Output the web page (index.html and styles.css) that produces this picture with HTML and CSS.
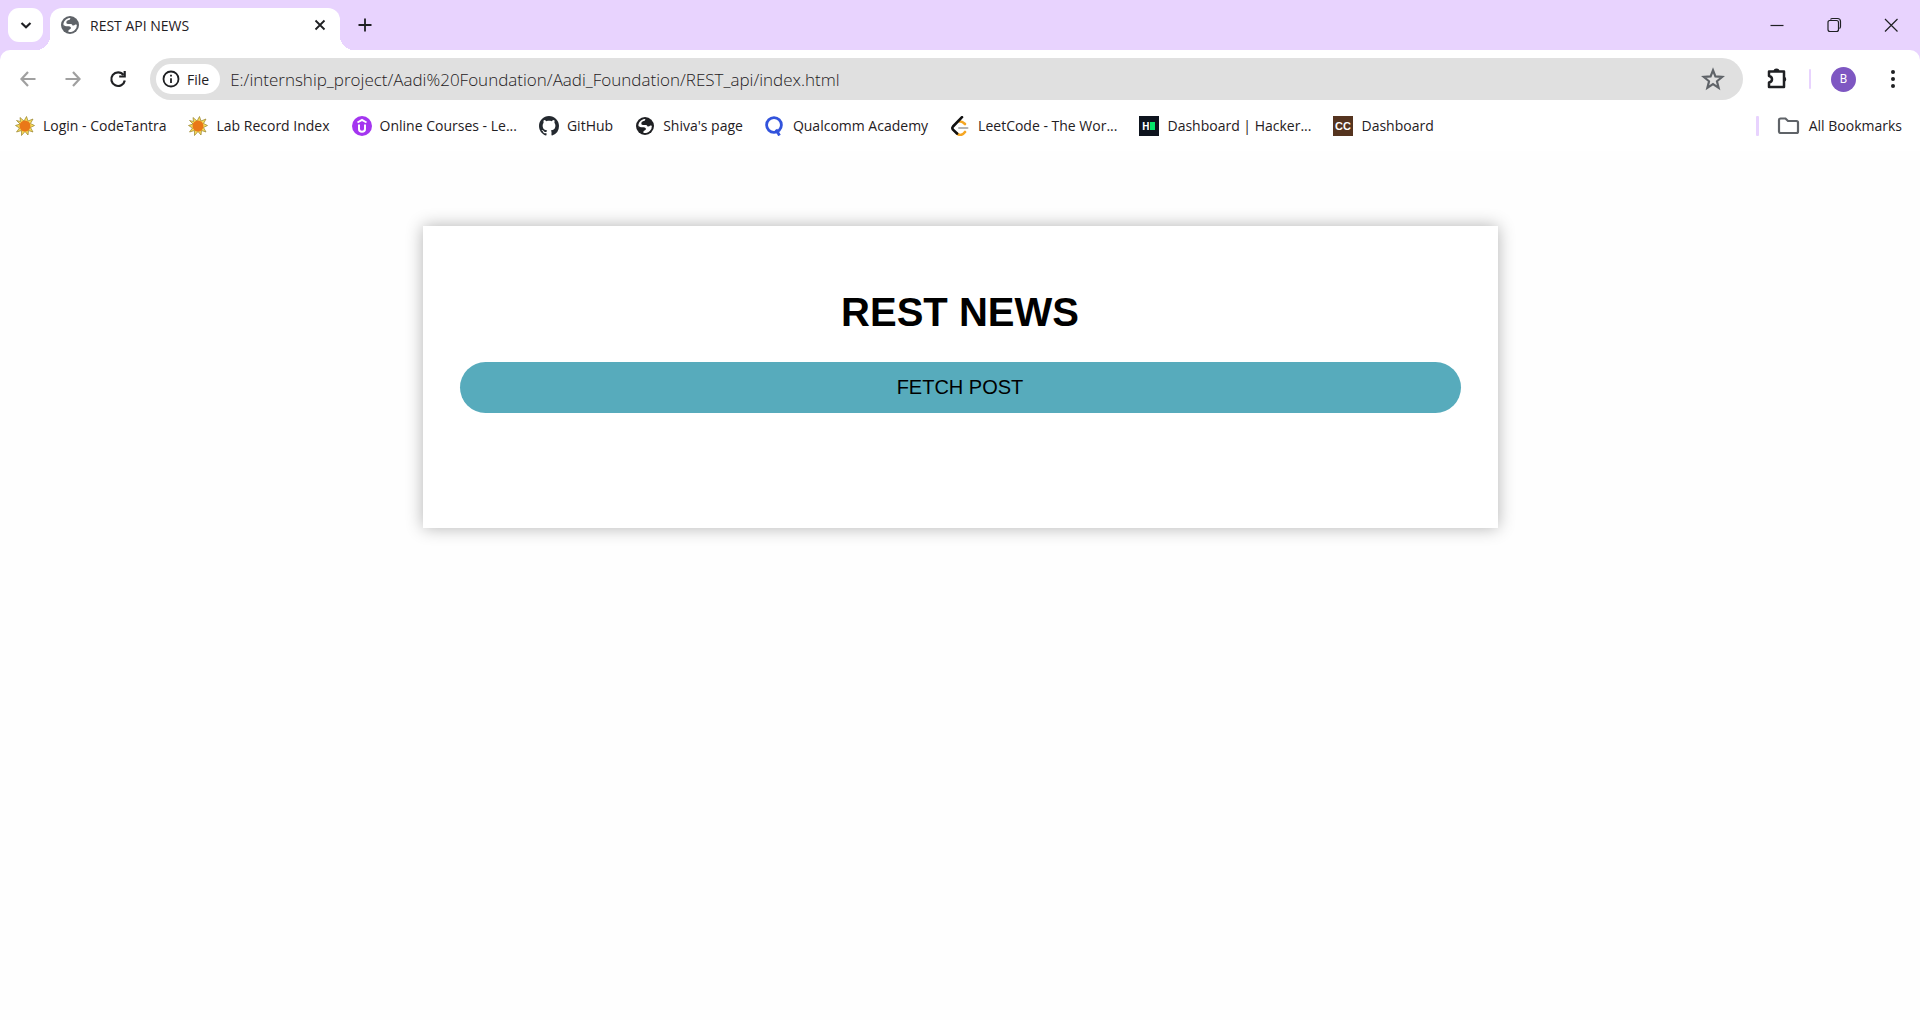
FILE: index.html
```html
<!DOCTYPE html>
<html lang="en">
<head>
<meta charset="utf-8">
<meta name="viewport" content="width=device-width, initial-scale=1">
<title>REST API NEWS</title>
<link rel="stylesheet" href="styles.css">
</head>
<body>
<svg class="defs" aria-hidden="true">
  <symbol id="globe" viewBox="0 0 20 20">
    <circle cx="10" cy="10" r="9" fill="currentColor"/>
    <path d="M10.500 3.200Q10 5 8 5.200Q6.300 5.600 6.300 7.500Q6.300 9 8.300 9H11Q12.300 9 12.500 10.500Q14.300 10.800 15.200 9.500L16.900 9.700Q17 13 14.800 14.900Q13.500 16.500 11.200 16.900Q9 17 8.200 16.400Q8.300 14.600 10 14.200Q11.300 13.800 10.800 12.300Q9.800 11 8 11.200H3.100Q3 5 8.300 3.200Q9.400 2.900 10.500 3.200Z" fill="#fff"/>
    <path d="M3 9.500L7 12.500V16.500L4 15Z" fill="currentColor"/>
  </symbol>
  <symbol id="sun" viewBox="0 0 20 20">
    <path d="M5 1.500L9 5L11.500 .5L13 5L18 3L15.500 7.500L19.500 9.500L15.500 11.500L18 16L13.500 14.500L13 19L10 15.500L6.500 19.500L6.500 14.500L1.500 16L4.500 12L.5 9.500L5 8L1.500 4.500L5.500 5.500Z" fill="#f6dc5a" stroke="#96812d" stroke-width=".7"/>
    <circle cx="10" cy="10" r="5.500" fill="#e97817"/>
  </symbol>
</svg>

<header class="browser">
  <div class="tabstrip">
    <button class="tab-search" aria-label="Search tabs"><svg width="20" height="20" viewBox="0 0 20 20"><path d="M5.500 8L10 12.200L14.500 8" class="line heavy"/></svg></button>
    <div class="tab">
      <svg class="tab-icon" width="20" height="20"><use href="#globe"/></svg>
      <span class="tab-title">REST API NEWS</span>
      <button class="plain small" aria-label="Close tab"><svg width="20" height="20" viewBox="0 0 20 20"><path d="M5.500 5.500L14.500 14.500M14.500 5.500L5.500 14.500" class="line"/></svg></button>
    </div>
    <button class="plain new-tab" aria-label="New tab"><svg width="20" height="20" viewBox="0 0 20 20"><path d="M10 3.500V16.500M3.500 10H16.500" class="line"/></svg></button>
    <div class="window-controls">
      <button class="plain" aria-label="Minimize"><svg width="20" height="20" viewBox="0 0 20 20"><path d="M3.500 10.500H16.500" class="line thin"/></svg></button>
      <button class="plain" aria-label="Restore"><svg width="20" height="20" viewBox="0 0 20 20"><path d="M6.500 4.500Q7 3.500 8.500 3.500H13.500Q16.500 3.500 16.500 6.500V11.500Q16.500 13 15.500 13.500M5 5.500H12.500Q14.500 5.500 14.500 7.500V14.500Q14.500 16.500 12.500 16.500H6Q4 16.500 4 14.500V7.500Q4 5.500 6 5.500" class="line thin"/></svg></button>
      <button class="plain" aria-label="Close window"><svg width="20" height="20" viewBox="0 0 20 20"><path d="M4 4L16.500 16.500M16.500 4L4 16.500" class="line thin"/></svg></button>
    </div>
  </div>

  <div class="toolbar">
    <nav class="nav" aria-label="History">
      <button class="plain muted" aria-label="Back"><svg width="20" height="20" viewBox="0 0 20 20"><path d="M17.500 10H3.500M10 3L3.500 10L10 17" class="line heavy"/></svg></button>
      <button class="plain muted" aria-label="Forward"><svg width="20" height="20" viewBox="0 0 20 20"><path d="M2.500 10H16.500M10 3L16.500 10L10 17" class="line heavy"/></svg></button>
      <button class="plain" aria-label="Reload"><svg width="20" height="20" viewBox="0 0 20 20"><path d="M15.500 6A6.800 6.800 0 1 0 16.800 11.500" class="line heavy"/><path d="M16.700 2V7.500H11.200" class="line heavy"/></svg></button>
    </nav>
    <div class="omnibox">
      <button class="chip"><svg width="20" height="20" viewBox="0 0 20 20"><circle cx="10" cy="10" r="7.500" class="line"/><path d="M10 9.200V14M10 5.800V7.600" class="line"/></svg>File</button>
      <input class="url" type="text" aria-label="Address" value="E:/internship_project/Aadi%20Foundation/Aadi_Foundation/REST_api/index.html">
      <button class="plain grey" aria-label="Bookmark this page"><svg width="24" height="24" viewBox="0 0 20 20"><path d="M10 2.700L12 7.800L17.700 8.200L13.300 11.900L14.700 17.400L10 14.300L5.300 17.400L6.700 11.900L2.300 8.200L8 7.800Z" class="line"/></svg></button>
    </div>
    <button class="plain extensions" aria-label="Extensions"><svg width="24" height="24" viewBox="0 0 24 24"><path d="M4 4.500H19V20H4V15.500Q7 14.800 7 12.200Q7 9.500 4 9Z" class="line wide"/><path d="M8.500 4.500A3 3 0 0 1 14.500 4.500ZM19 9.500A2.800 2.800 0 0 1 19 15Z" fill="currentColor"/></svg></button>
    <span class="divider"></span>
    <button class="avatar" aria-label="Profile B">B</button>
    <button class="plain" aria-label="Menu"><svg width="20" height="20" viewBox="0 0 20 20" fill="currentColor"><circle cx="10" cy="3" r="2"/><circle cx="10" cy="10" r="2"/><circle cx="10" cy="17" r="2"/></svg></button>
  </div>

  <nav class="bookmarks" aria-label="Bookmarks">
    <a href="#"><svg width="20" height="20"><use href="#sun"/></svg>Login - CodeTantra</a>
    <a href="#"><svg width="20" height="20"><use href="#sun"/></svg>Lab Record Index</a>
    <a href="#"><svg width="20" height="20" viewBox="0 0 20 20"><circle cx="10" cy="10" r="10" fill="#a435f0"/><path d="M5.500 6.500L10 4L14.500 6.500M7 8.500V13Q7 15.800 10 15.800Q13 15.800 13 13V8.500" fill="none" stroke="#fff" stroke-width="2"/></svg>Online Courses - Le...</a>
    <a href="#"><svg width="20" height="20" viewBox="0 0 16 16"><path fill="#24292f" d="M8 0C3.580 0 0 3.580 0 8c0 3.540 2.290 6.530 5.470 7.590.4.070.55-.17.55-.38 0-.19-.01-.82-.01-1.490-2.010.37-2.530-.49-2.690-.94-.09-.23-.48-.94-.82-1.130-.28-.15-.68-.52-.01-.53.63-.01 1.080.58 1.230.82.72 1.210 1.870.87 2.330.66.070-.52.28-.87.51-1.070-1.780-.2-3.640-.89-3.640-3.950 0-.87.31-1.590.82-2.150-.08-.2-.36-1.020.08-2.120 0 0 .67-.21 2.200.82.640-.18 1.320-.27 2-.27s1.360.09 2 .27c1.530-1.040 2.200-.82 2.200-.82.440 1.100.16 1.920.08 2.120.51.56.82 1.270.82 2.150 0 3.070-1.870 3.750-3.650 3.950.29.25.54.73.54 1.480 0 1.070-.01 1.930-.01 2.200 0 .21.15.46.55.38A8.010 8.010 0 0 0 16 8c0-4.420-3.580-8-8-8z"/></svg>GitHub</a>
    <a href="#"><svg width="20" height="20"><use href="#globe"/></svg>Shiva's page</a>
    <a href="#"><svg width="20" height="20" viewBox="0 0 20 20"><circle cx="9" cy="9" r="7.400" fill="none" stroke="#3253dc" stroke-width="2.800"/><path d="M11 13.500L14.500 19.500" stroke="#3253dc" stroke-width="2.800"/></svg>Qualcomm Academy</a>
    <a href="#"><svg width="20" height="20" viewBox="0 0 20 20" fill="none" stroke-width="2.600" stroke-linecap="round"><path d="M9.500 5.500Q12 5 15 8" stroke="#f5a623"/><path d="M9 12H17.500" stroke="#b3b3b3" stroke-width="2"/><path d="M7 17.500Q11 21 15 16" stroke="#f5a623"/><path d="M12 1.200L3 10.500Q1.700 12 3 13.700L7 17.500" stroke="#111"/></svg>LeetCode - The Wor...</a>
    <a href="#"><svg width="20" height="20" viewBox="0 0 20 20"><path d="M0 0H20V20H0Z" fill="#0e141e"/><path d="M11 6H16V14H11Z" fill="#05e76b"/><text x="3" y="14" class="mark">H</text></svg>Dashboard | Hacker...</a>
    <a href="#"><svg width="20" height="20" viewBox="0 0 20 20"><path d="M0 0H20V20H0Z" fill="#55341f"/><text x="10" y="14" text-anchor="middle" class="mark wide-mark">CC</text></svg>Dashboard</a>
    <span class="divider"></span>
    <a href="#" class="all"><svg width="24" height="20" viewBox="0 0 24 20"><path d="M2 4Q2 2.500 3.500 2.500H8.500L11 5H19.500Q21 5 21 6.500V15.500Q21 17 19.500 17H3.500Q2 17 2 15.500Z" class="line heavy grey"/></svg>All Bookmarks</a>
  </nav>
</header>

<main class="page">
  <section class="card">
    <h1>REST NEWS</h1>
    <button class="fetch">FETCH POST</button>
  </section>
</main>
</body>
</html>
```
FILE: styles.css
```css
* { box-sizing: border-box; }

body {
  margin: 0;
  min-height: 100vh;
  display: flex;
  flex-direction: column;
  background: #fefefe;
  font-family: "Liberation Sans", Arial, sans-serif;
}

button, input {
  border: 0;
  padding: 0;
  margin: 0;
  background: none;
  font: inherit;
  color: inherit;
}

svg { flex: none; display: block; }
.defs { position: absolute; width: 0; height: 0; }

.line { fill: none; stroke: currentColor; stroke-width: 1.8; }
.line.thin { stroke-width: 1.2; }
.line.heavy { stroke-width: 2.2; }
.line.wide { stroke-width: 2.5; stroke-linejoin: round; }
.grey { color: #5f6368; }
.mark { font: 700 10px "Open Sans", sans-serif; fill: #fff; }
.wide-mark { font: 700 11px "Liberation Sans", sans-serif; }

/* Browser frame */
.browser {
  background: #e8d3fe;
  color: #1f2023;
  font-family: "Open Sans", "Segoe UI", sans-serif;
  font-size: 14px;
}

.plain {
  width: 36px;
  height: 36px;
  display: flex;
  align-items: center;
  justify-content: center;
  flex: none;
}
.plain.small { width: 20px; height: 20px; }
.plain.muted { color: #a0a0a0; }

.tabstrip {
  display: flex;
  height: 50px;
  padding: 8px 1px 0 8px;
}

.tab-search {
  width: 35px;
  height: 34px;
  display: flex;
  align-items: center;
  justify-content: center;
  border-radius: 11px;
  background: #fff;
  margin-right: 7px;
}

.tab {
  position: relative;
  width: 290px;
  display: flex;
  align-items: center;
  gap: 10px;
  padding: 0 10px 8px;
  border-radius: 12px 12px 0 0;
  background: #fff;
}
.tab::before,
.tab::after {
  content: "";
  position: absolute;
  bottom: 0;
  width: 14px;
  height: 14px;
}
.tab::before {
  right: 100%;
  background: radial-gradient(circle at 0 0, transparent 14px, #fff 14px);
}
.tab::after {
  left: 100%;
  background: radial-gradient(circle at 100% 0, transparent 14px, #fff 14px);
}
.tab-title { flex: 1; }
.tab-icon { color: #5f6368; }

.new-tab { margin-left: 7px; height: 34px; }

.window-controls { display: flex; margin-left: auto; }
.window-controls .plain { width: 57px; height: 33px; }

.toolbar {
  display: flex;
  align-items: center;
  height: 58px;
  padding: 0 10px;
  border-radius: 10px 10px 0 0;
  background: #fff;
}
.nav { display: flex; gap: 9px; margin-right: 14px; }

.omnibox {
  flex: 1;
  display: flex;
  align-items: center;
  height: 42px;
  padding: 0 12px 0 6px;
  border-radius: 21px;
  background: #e0e0e0;
}
.chip {
  display: flex;
  align-items: center;
  gap: 6px;
  height: 30px;
  padding: 0 11px 0 5px;
  border-radius: 15px;
  background: #fff;
}
.url {
  flex: 1;
  min-width: 0;
  margin-left: 10px;
  font-size: 17px;
  font-weight: 350;
}

.divider {
  width: 2px;
  height: 20px;
  border-radius: 1px;
  background: #e8d3fe;
}
.extensions { margin: 0 14px 0 16px; }

.avatar {
  width: 25px;
  height: 25px;
  margin: 0 27px 0 20px;
  border-radius: 50%;
  background: #7e57c2;
  color: #fff;
  font-family: Roboto, sans-serif;
  font-size: 12px;
}
.toolbar > .plain:last-child { width: 20px; margin-right: 7px; }

.bookmarks {
  display: flex;
  align-items: center;
  gap: 22px;
  height: 43px;
  padding: 0 18px 8px 15px;
  background: #fff;
}
.bookmarks a {
  display: flex;
  align-items: center;
  gap: 8px;
  color: inherit;
  text-decoration: none;
  white-space: nowrap;
}
.bookmarks .divider { width: 3px; margin-left: auto; }
.bookmarks .all { margin-left: -4px; }

/* Page content */
.page { flex: 1; padding: 75px 16px; }

.card {
  max-width: 1075px;
  margin: 0 auto;
  padding: 37px 37px 115px;
  background: #fff;
  box-shadow: 0 0 16px rgba(0, 0, 0, 0.3);
}
.card h1 {
  margin: 26px 0 27px;
  font-size: 40px;
  line-height: 46px;
  text-align: center;
}
.fetch {
  display: block;
  width: 100%;
  height: 51px;
  border-radius: 26px;
  background: #57abbc;
  color: #000;
  font-size: 20px;
}
```
